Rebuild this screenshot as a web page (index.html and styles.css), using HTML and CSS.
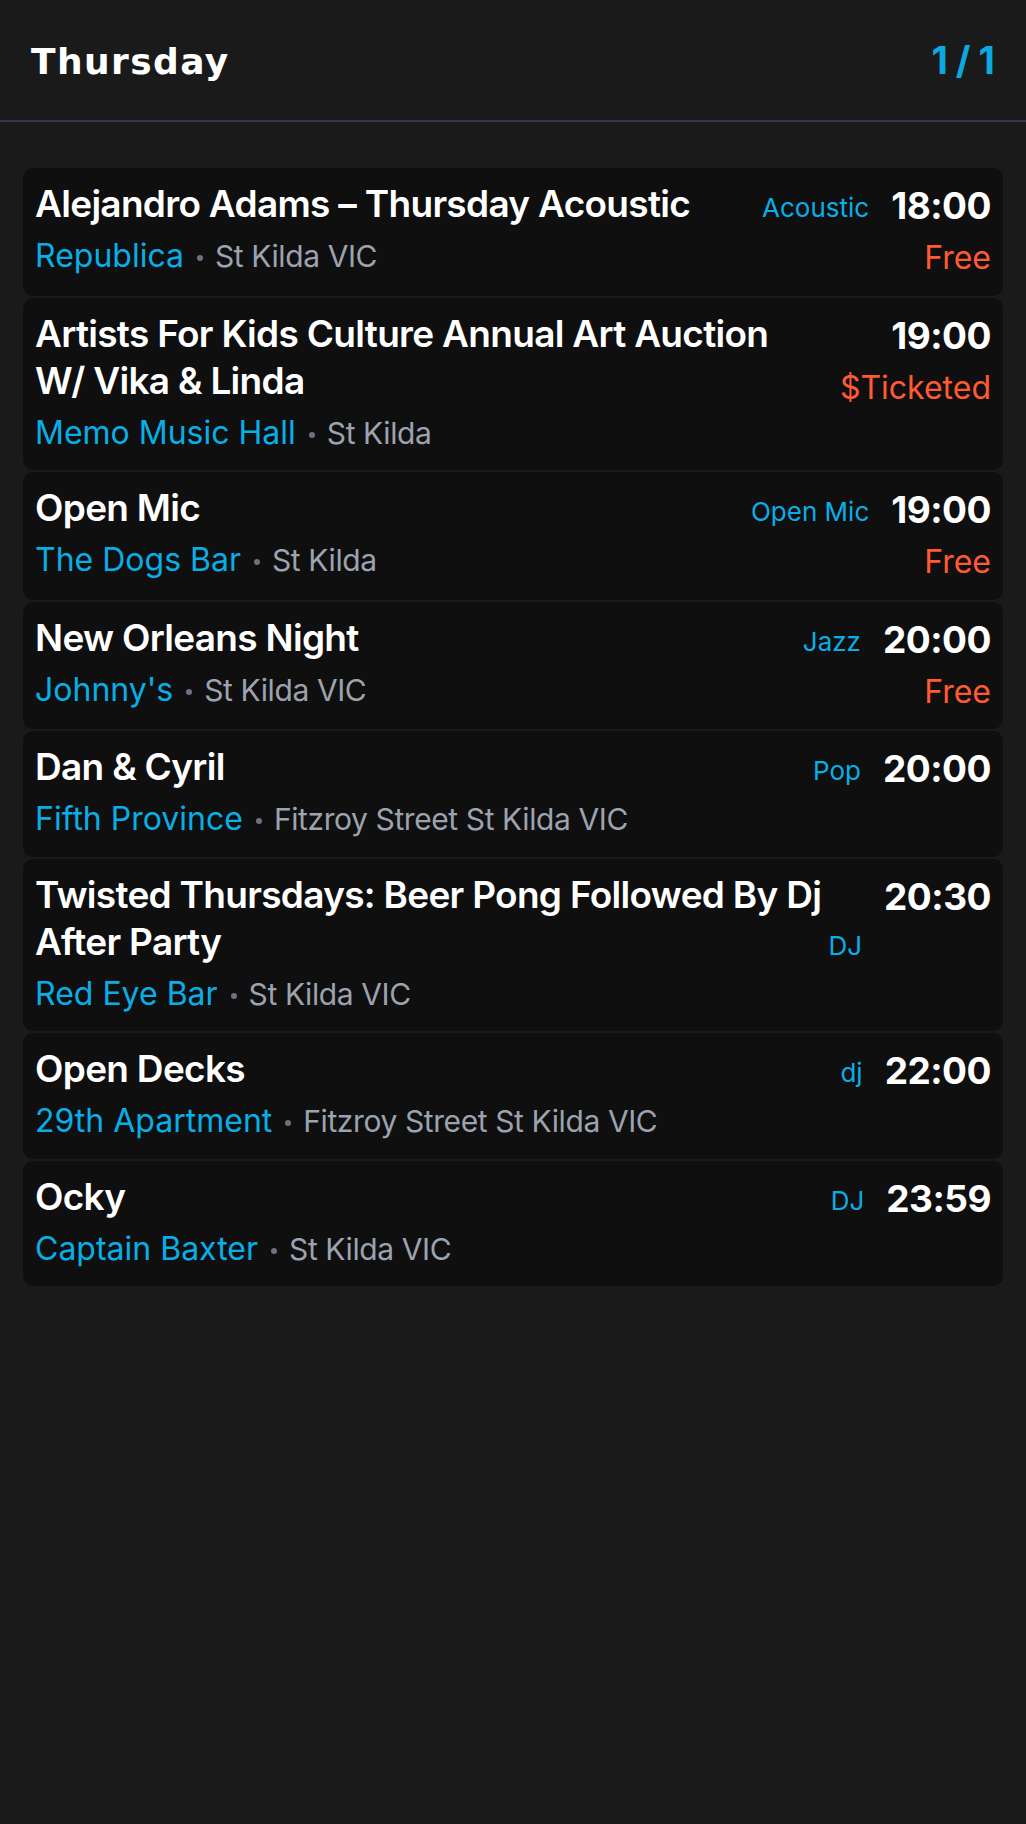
FILE: index.html
```html
<!DOCTYPE html>
<html lang="en">
<head>
<meta charset="utf-8">
<title>Thursday</title>
<link rel="stylesheet" href="styles.css">
</head>
<body>
<header class="topbar">
  <h1 class="day">Thursday</h1>
  <div class="pager">1/1</div>
</header>
<main class="list">
  <article class="card">
    <div class="main">
      <div class="title-row"><h2 class="title">Alejandro Adams – Thursday Acoustic</h2><span class="tag">Acoustic</span></div>
      <div class="venue-row"><span class="venue">Republica</span><span class="dot"></span><span class="loc">St Kilda VIC</span></div>
    </div>
    <div class="side"><div class="time">18:00</div><div class="price">Free</div></div>
  </article>
  <article class="card">
    <div class="main">
      <div class="title-row"><h2 class="title">Artists For Kids Culture Annual Art Auction W/ Vika &amp; Linda</h2><span class="tag"></span></div>
      <div class="venue-row"><span class="venue">Memo Music Hall</span><span class="dot"></span><span class="loc">St Kilda</span></div>
    </div>
    <div class="side"><div class="time">19:00</div><div class="price">$Ticketed</div></div>
  </article>
  <article class="card">
    <div class="main">
      <div class="title-row"><h2 class="title">Open Mic</h2><span class="tag">Open Mic</span></div>
      <div class="venue-row"><span class="venue">The Dogs Bar</span><span class="dot"></span><span class="loc">St Kilda</span></div>
    </div>
    <div class="side"><div class="time">19:00</div><div class="price">Free</div></div>
  </article>
  <article class="card">
    <div class="main">
      <div class="title-row"><h2 class="title">New Orleans Night</h2><span class="tag">Jazz</span></div>
      <div class="venue-row"><span class="venue">Johnny's</span><span class="dot"></span><span class="loc">St Kilda VIC</span></div>
    </div>
    <div class="side"><div class="time">20:00</div><div class="price">Free</div></div>
  </article>
  <article class="card">
    <div class="main">
      <div class="title-row"><h2 class="title">Dan &amp; Cyril</h2><span class="tag">Pop</span></div>
      <div class="venue-row"><span class="venue">Fifth Province</span><span class="dot"></span><span class="loc">Fitzroy Street St Kilda VIC</span></div>
    </div>
    <div class="side"><div class="time">20:00</div></div>
  </article>
  <article class="card">
    <div class="main">
      <div class="title-row"><h2 class="title">Twisted Thursdays: Beer Pong Followed By Dj After Party</h2><span class="tag">DJ</span></div>
      <div class="venue-row"><span class="venue">Red Eye Bar</span><span class="dot"></span><span class="loc">St Kilda VIC</span></div>
    </div>
    <div class="side"><div class="time">20:30</div></div>
  </article>
  <article class="card">
    <div class="main">
      <div class="title-row"><h2 class="title">Open Decks</h2><span class="tag">dj</span></div>
      <div class="venue-row"><span class="venue">29th Apartment</span><span class="dot"></span><span class="loc">Fitzroy Street St Kilda VIC</span></div>
    </div>
    <div class="side"><div class="time">22:00</div></div>
  </article>
  <article class="card">
    <div class="main">
      <div class="title-row"><h2 class="title">Ocky</h2><span class="tag">DJ</span></div>
      <div class="venue-row"><span class="venue">Captain Baxter</span><span class="dot"></span><span class="loc">St Kilda VIC</span></div>
    </div>
    <div class="side"><div class="time">23:59</div></div>
  </article>
</main>
</body>
</html>
```
FILE: styles.css
```css
html, body {
  margin: 0;
  padding: 0;
  background: #1a1a1a;
}
body {
  font-family: Inter, "Noto Sans", "Liberation Sans", sans-serif;
  color: #ffffff;
  min-height: 1824px;
}
.topbar {
  display: flex;
  justify-content: space-between;
  align-items: baseline;
  padding: 39px 31px 0 31px;
  height: 81px;
  border-bottom: 2px solid #313946;
}
.day {
  margin: 0;
  font-family: "DejaVu Sans", Inter, sans-serif;
  font-size: 36px;
  line-height: 42px;
  font-weight: 700;
  letter-spacing: 1.4px;
}
.pager {
  font-size: 38px;
  line-height: 42px;
  font-weight: 700;
  color: #0aa9e0;
  letter-spacing: 8px;
  margin-right: -8px;
}
.list {
  display: flex;
  flex-direction: column;
  gap: 2px;
  padding: 46px 23px 0 23px;
}
.card {
  display: flex;
  align-items: flex-start;
  gap: 22px;
  background: #0f0f0f;
  border-radius: 10px;
  padding: 12px 12px 17.5px 12px;
}
.main {
  flex: 1;
  min-width: 0;
}
.title-row {
  display: flex;
  justify-content: space-between;
  align-items: last baseline;
  gap: 6px;
}
.title {
  margin: 0;
  font-size: 37px;
  line-height: 47px;
  font-weight: 600;
  letter-spacing: -0.7px;
  color: #ffffff;
}
.tag {
  flex: none;
  min-width: 10px;
  text-align: right;
  font-size: 26px;
  line-height: 32px;
  font-weight: 400;
  color: #0aaee6;
}
.venue-row {
  margin-top: 9px;
  font-size: 32px;
  line-height: 40px;
  white-space: nowrap;
}
.venue {
  color: #0aaee6;
}
.dot {
  display: inline-block;
  width: 6px;
  height: 6px;
  border-radius: 50%;
  background: #6b7280;
  margin: 0 12px 0 13px;
  vertical-align: middle;
}
.loc {
  color: #9ca3af;
  font-size: 30px;
  letter-spacing: -0.4px;
}
.side {
  flex: none;
  text-align: right;
  padding-top: 2px;
}
.time {
  font-size: 37px;
  line-height: 47px;
  font-weight: 700;
  letter-spacing: -0.5px;
}
.price {
  margin-top: 9px;
  font-size: 32px;
  line-height: 40px;
  color: #ff5a34;
}
```
